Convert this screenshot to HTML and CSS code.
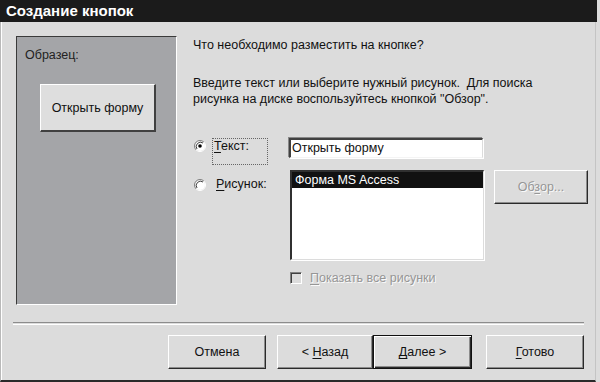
FILE: index.html
```html
<!DOCTYPE html>
<html lang="ru">
<head>
<meta charset="utf-8">
<title>Создание кнопок</title>
<link rel="stylesheet" href="styles.css">
</head>
<body>
<div class="window">
  <div class="titlebar">Создание кнопок</div>
  <div class="body">
    <div class="main">
      <div class="sample">
        <div class="sample-label">Образец:</div>
        <div class="sample-btn">Открыть форму</div>
      </div>
      <div class="content">
        <p class="q">Что необходимо разместить на кнопке?</p>
        <p class="hint">Введите текст или выберите нужный рисунок.&nbsp; Для поиска<br>рисунка на диске воспользуйтесь кнопкой "Обзор".</p>
        <div class="row row-text">
          <svg class="radio" width="12" height="12" viewBox="0 0 12 12">
            <circle cx="6" cy="6" r="5" fill="#fff"/>
            <path d="M9.9 2.1 A5.5 5.5 0 0 0 2.1 9.9" stroke="#808080" fill="none"/>
            <path d="M2.1 9.9 A5.5 5.5 0 0 0 9.9 2.1" stroke="#fff" fill="none"/>
            <path d="M9 3 A4.3 4.3 0 0 0 3 9" stroke="#404040" fill="none"/>
            <circle cx="6" cy="6" r="1.8" fill="#000"/>
          </svg>
          <span class="label focus"><u>Т</u>екст:</span>
          <div class="input">Открыть форму</div>
        </div>
        <div class="row row-pic">
          <svg class="radio" width="12" height="12" viewBox="0 0 12 12">
            <circle cx="6" cy="6" r="5" fill="#fff"/>
            <path d="M9.9 2.1 A5.5 5.5 0 0 0 2.1 9.9" stroke="#808080" fill="none"/>
            <path d="M2.1 9.9 A5.5 5.5 0 0 0 9.9 2.1" stroke="#fff" fill="none"/>
            <path d="M9 3 A4.3 4.3 0 0 0 3 9" stroke="#404040" fill="none"/>
          </svg>
          <span class="label label-pic"><u>Р</u>исунок:</span>
          <div class="list"><div class="item sel">Форма MS Access</div></div>
          <div class="btn browse"><span class="dis">Об<u>з</u>ор...</span></div>
        </div>
        <div class="row row-check">
          <span class="check"></span>
          <span class="dis"><u>П</u>оказать все рисунки</span>
        </div>
      </div>
    </div>
    <div class="sep"></div>
    <div class="buttons">
      <div class="btn b-cancel"><span>Отмена</span></div>
      <div class="btn b-back"><span>&lt; <u>Н</u>азад</span></div>
      <div class="btn b-next default"><span><u>Д</u>алее &gt;</span></div>
      <div class="btn b-done"><span><u>Г</u>отово</span></div>
    </div>
  </div>
</div>
</body>
</html>
```
FILE: styles.css
```css
html, body {
  margin: 0;
  padding: 0;
  background: #dcdcdc;
}
body {
  font-family: "Liberation Sans", Arial, sans-serif;
  font-size: 12.5px;
  color: #111;
}
.window {
  width: 600px;
  height: 382px;
  box-sizing: border-box;
  display: flex;
  flex-direction: column;
  background: #dcdcdc;
  overflow: hidden;
}
.titlebar {
  height: 22px;
  width: 597px;
  background: #1b1b1b;
  color: #fff;
  font-weight: bold;
  font-size: 15px;
  line-height: 22px;
  padding-left: 6px;
  box-sizing: border-box;
  flex: none;
}
.body {
  flex: 1;
  width: 596px;
  box-sizing: border-box;
  border-left: 1px solid #b9b9b9;
  border-right: 1px solid #c4c4c4;
  border-bottom: 2px solid #2a2a2a;
  box-shadow: inset 1px 0 #fff;
  padding: 14px 11px 0 15px;
  display: flex;
  flex-direction: column;
}
.main {
  display: flex;
  height: 269px;
  flex: none;
}
.sample {
  width: 161px;
  height: 269px;
  box-sizing: border-box;
  background: #a4a5a8;
  border-top: 1px solid #3a3a3a;
  border-left: 1px solid #3a3a3a;
  border-bottom: 1px solid #fff;
  border-right: 1px solid #fff;
  flex: none;
  padding: 10px 0 0 8px;
}
.sample-label {
  line-height: 16px;
  color: #222;
}
.sample-btn {
  margin: 21px 0 0 15px;
  width: 116px;
  height: 48px;
  box-sizing: border-box;
  background: #dedede;
  border-top: 1px solid #fff;
  border-left: 1px solid #fff;
  border-right: 2px solid #404040;
  border-bottom: 2px solid #404040;
  display: flex;
  align-items: center;
  justify-content: center;
  color: #111;
}
.content {
  margin-left: 16px;
  flex: 1;
  display: flex;
  flex-direction: column;
}
.q {
  margin: 1px 0 0 0;
  line-height: 16px;
}
.hint {
  margin: 22px 0 0 0;
  line-height: 16px;
}
.row {
  display: flex;
  align-items: flex-start;
}
.row-text {
  margin-top: 31px;
  height: 32px;
}
.radio {
  flex: none;
  margin-left: 1px;
}
.row-text .radio { margin-top: 2px; }
.row-pic .radio { margin-top: 9px; }
.label {
  line-height: 16px;
  box-sizing: border-box;
  flex: none;
}
.focus {
  margin-left: 6px;
  width: 56px;
  height: 27px;
  padding-left: 1px;
  border: 1px dotted #666;
  line-height: 14px;
  padding-top: 0;
}
.label-pic {
  margin-left: 10px;
  width: 74px;
  margin-top: 6px;
}
.input {
  margin-left: 21px;
  width: 194px;
  height: 20px;
  box-sizing: border-box;
  background: #fff;
  border-top: 2px solid #404040;
  border-left: 2px solid #404040;
  border-right: 1px solid #dcdcdc;
  border-bottom: 1px solid #f4f4f4;
  box-shadow: -1px -1px 0 #888, 1px 1px 0 #fff;
  padding-left: 1px;
  line-height: 17px;
  flex: none;
}
.list {
  width: 194px;
  height: 90px;
  box-sizing: border-box;
  background: #fff;
  border-top: 2px solid #303030;
  border-left: 2px solid #303030;
  border-right: 1px solid #dcdcdc;
  border-bottom: 1px solid #dcdcdc;
  box-shadow: 1px 1px 0 #fff;
  flex: none;
}
.item {
  height: 16px;
  line-height: 16px;
  padding-left: 3px;
}
.sel {
  background: #111;
  color: #fff;
}
.btn {
  box-sizing: border-box;
  background: #dcdcdc;
  border-top: 1px solid #fff;
  border-left: 1px solid #fff;
  border-right: 1px solid #2a2a2a;
  border-bottom: 1px solid #2a2a2a;
  box-shadow: inset -1px -1px 0 #8c8c8c;
  display: flex;
  align-items: center;
  justify-content: center;
  flex: none;
}
.browse {
  margin-left: 10px;
  width: 94px;
  height: 34px;
}
.dis {
  color: #969696;
  text-shadow: 1px 1px 0 #fafafa;
}
.row-check {
  margin-top: 11px;
  align-items: center;
}
.check {
  margin-left: 97px;
  width: 12px;
  height: 12px;
  box-sizing: border-box;
  border-top: 1px solid #808080;
  border-left: 1px solid #808080;
  border-right: 1px solid #fff;
  border-bottom: 1px solid #fff;
  box-shadow: inset 1px 1px 0 #404040;
  background: #dcdcdc;
  margin-right: 8px;
  flex: none;
}
.sep {
  margin: 17px 0 0 -3px;
  height: 1px;
  border-top: 1px solid #8c8c8c;
  border-bottom: 1px solid #fff;
  flex: none;
}
.buttons {
  margin-top: 10px;
  display: flex;
  justify-content: flex-end;
  height: 34px;
}
.buttons .btn { height: 34px; }
.b-cancel { width: 98px; }
.b-back { width: 96px; margin-left: 11px; }
.b-next { width: 99px; }
.b-done { width: 98px; margin-left: 14px; }
.default {
  border: 1px solid #111;
  box-shadow: inset 1px 1px 0 #fff, inset -1px -1px 0 #2a2a2a, inset -2px -2px 0 #8c8c8c;
}
u { text-decoration: underline; text-underline-offset: 2px; }
```
